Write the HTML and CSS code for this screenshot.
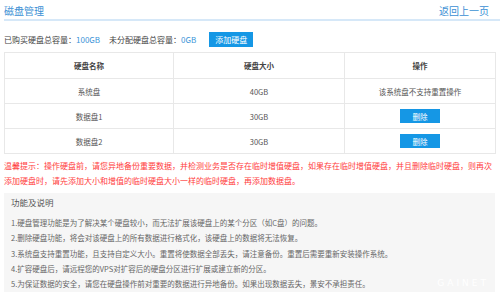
FILE: index.html
```html
<!DOCTYPE html>
<html lang="zh">
<head>
<meta charset="utf-8">
<link rel="stylesheet" href="styles.css">
</head>
<body>
<div class="page">
  <div class="head">
    <span class="title">磁盘管理</span>
    <a class="back">返回上一页</a>
  </div>
  <div class="info">
    <span>已购买硬盘总容量：<b class="num">100GB</b></span>
    <span class="gap">未分配硬盘总容量：<b class="num">0GB</b></span>
    <span class="btn add">添加硬盘</span>
  </div>
  <table class="disks">
    <colgroup><col class="c1"><col class="c2"><col class="c3"></colgroup>
    <thead>
      <tr><th>硬盘名称</th><th>硬盘大小</th><th>操作</th></tr>
    </thead>
    <tbody>
      <tr><td>系统盘</td><td>40GB</td><td>该系统盘不支持重置操作</td></tr>
      <tr><td>数据盘1</td><td>30GB</td><td><span class="btn del">删除</span></td></tr>
      <tr><td>数据盘2</td><td>30GB</td><td><span class="btn del">删除</span></td></tr>
    </tbody>
  </table>
  <p class="warn">温馨提示：操作硬盘前，请您异地备份重要数据，并检测业务是否存在临时增值硬盘，如果存在临时增值硬盘，并且删除临时硬盘，则再次添加硬盘时，请先添加大小和增值的临时硬盘大小一样的临时硬盘，再添加数据盘。</p>
  <div class="notes">
    <div class="notes-title">功能及说明</div>
    <ol class="list">
      <li>1.硬盘管理功能是为了解决某个硬盘较小，而无法扩展该硬盘上的某个分区（如C盘）的问题。</li>
      <li>2.删除硬盘功能，将会对该硬盘上的所有数据进行格式化，该硬盘上的数据将无法恢复。</li>
      <li>3.系统盘支持重置功能，且支持自定义大小。重置将使数据全部丢失，请注意备份。重置后需要重新安装操作系统。</li>
      <li>4.扩容硬盘后，请远程您的VPS对扩容后的硬盘分区进行扩展或建立新的分区。</li>
      <li>5.为保证数据的安全，请您在硬盘操作前对重要的数据进行异地备份。如果出现数据丢失，景安不承担责任。</li>
    </ol>
    <span class="mark">GAINET</span>
  </div>
</div>
</body>
</html>
```

FILE: styles.css
```css
* { box-sizing: border-box; }
html, body { margin: 0; padding: 0; background: #fff; }
body {
  font-family: "Noto Sans CJK SC", "Noto Sans", sans-serif;
  color: #555;
  font-size: 8px;
  width: 500px;
  height: 292px;
  overflow: hidden;
}
.page { padding: 0 5px 0 4px; }
.head {
  display: flex;
  justify-content: space-between;
  align-items: center;
  height: 21px;
  border-bottom: 2px solid #d6e8f8;
  margin-right: -5px;
  padding-right: 11px;
}
.title { color: #3b8fd4; font-size: 10px; padding-top: 1px; }
.back { color: #3b8fd4; font-size: 10px; padding-top: 1px; }
.info {
  display: flex;
  align-items: center;
  height: 15px;
  margin-top: 11px;
  font-size: 8px;
  color: #444;
}
.num { font-weight: normal; color: #3b94d8; }
.gap { margin-left: 9px; }
.btn {
  display: inline-flex;
  align-items: center;
  justify-content: center;
  background: #1597e5;
  color: #fff;
}
.add { width: 44px; height: 15px; margin-left: 13px; font-size: 8px; }
.disks {
  margin-top: 5px;
  width: 491px;
  border-collapse: collapse;
  table-layout: fixed;
  border: 1px solid #e8e8e8;
}
.c1 { width: 169px; }
.c2 { width: 171px; }
.c3 { width: 151px; }
.disks th, .disks td {
  border: 1px solid #e8e8e8;
  text-align: center;
  height: 25px;
  padding: 0;
  font-size: 7.5px;
  color: #555;
}
.disks th { font-weight: bold; color: #444; height: 26px; }
.del { width: 40px; height: 14px; font-size: 7.5px; }
.warn {
  margin: 4px 0 0;
  color: #ff3c3c;
  font-size: 8px;
  line-height: 15px;
}
.notes {
  position: relative;
  margin-top: 5px;
  background: #f6f6f6;
  padding: 0 0 10px 7px;
  height: 110px;
}
.notes-title { font-size: 8.5px; color: #555; line-height: 16px; padding-top: 1px; }
.list {
  list-style: none;
  margin: 5px 0 0;
  padding: 0;
  font-size: 7.5px;
  line-height: 15.3px;
  color: #666;
}
.mark {
  position: absolute;
  right: 6px;
  top: 84px;
  color: #fff;
  font-family: "DejaVu Sans", sans-serif;
  font-size: 9px;
  line-height: 12px;
  letter-spacing: 3px;
}
```
